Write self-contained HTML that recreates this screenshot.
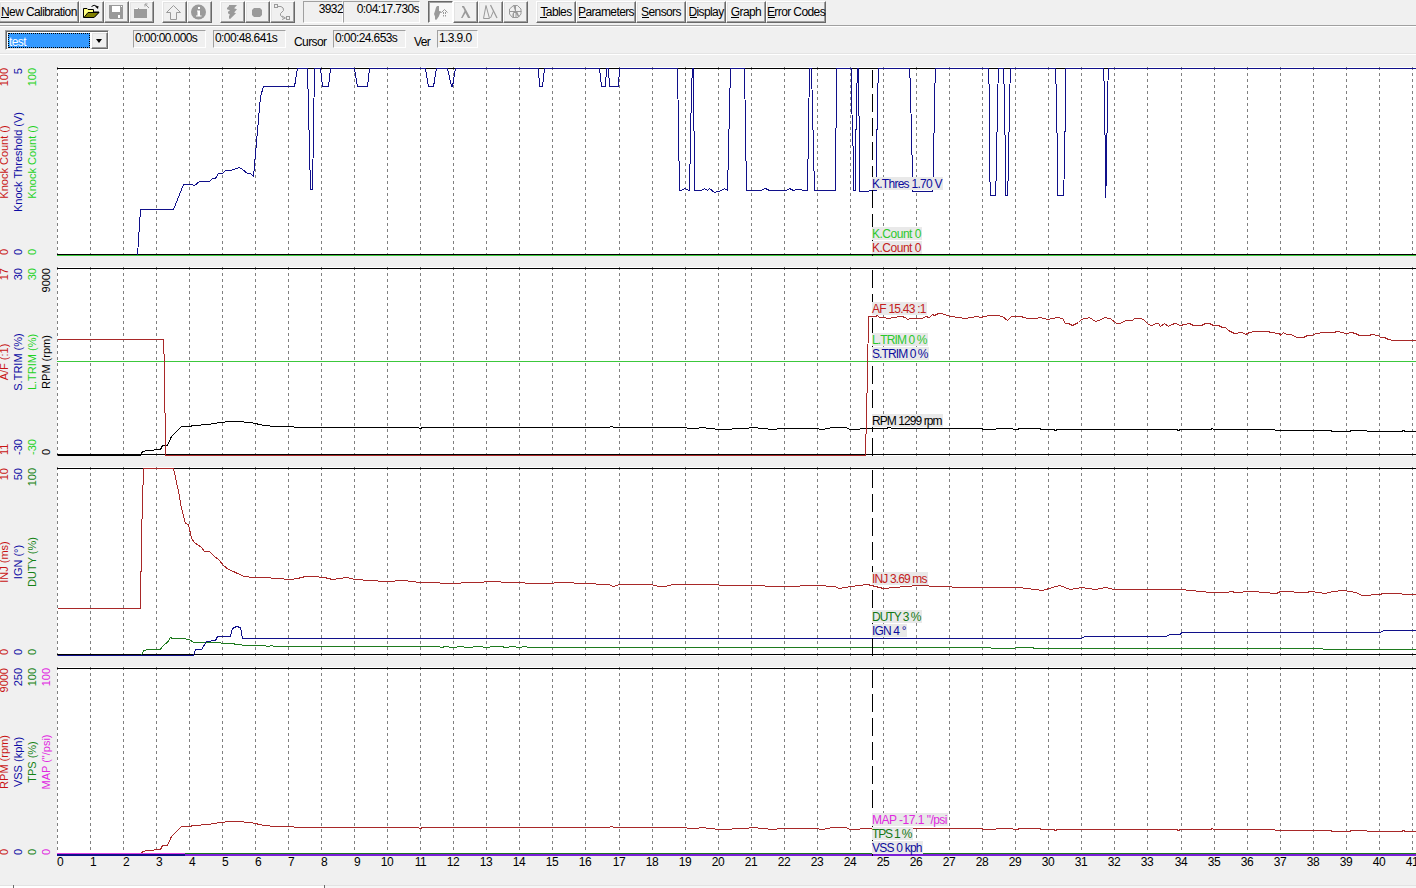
<!DOCTYPE html><html><head><meta charset="utf-8"><style>
*{margin:0;padding:0;box-sizing:border-box}
html,body{width:1416px;height:888px;overflow:hidden;background:#f0f0f0;font-family:"Liberation Sans",sans-serif;font-size:12px;color:#000;letter-spacing:-0.6px}
.a{position:absolute}
.btn{position:absolute;top:1px;height:22px;border-top:1px solid #fff;border-left:1px solid #fff;border-right:1px solid #696969;border-bottom:1px solid #696969;box-shadow:inset -1px -1px #a0a0a0,inset 1px 1px #e3e3e3;background:#f0f0f0;white-space:nowrap}
.btn svg{position:absolute;left:0;top:0}
.t{position:absolute;top:6px;white-space:nowrap;line-height:13px}
.u{position:absolute;height:1px;background:#000;top:17px}
.box{position:absolute;border-top:1px solid #a0a0a0;border-left:1px solid #a0a0a0;border-right:1px solid #fff;border-bottom:1px solid #fff;white-space:nowrap;line-height:13px}
</style></head><body>
<div class="btn" style="left:-1px;width:80px"></div><div class="t" style="left:1px">New Calibration</div><div class="u" style="left:1px;width:8px"></div>
<div class="btn" style="left:79px;width:25px"><svg style="left:-1px;top:-1px" width="24" height="21" viewBox="79 1 24 21"><path d="M83.5 17.5 V8.5 H87 L88 9.5 H93.5 V12 H99 L94 17.5 Z" fill="#ffff80" stroke="#000" stroke-width="1"/><path d="M84 17.5 L88 12.5 H99 L94 17.5 Z" fill="#808000" stroke="#000" stroke-width="1"/><path d="M91.5 6.5 Q94 4 97 6.5" fill="none" stroke="#000" stroke-width="1"/><path d="M95 6.5 L98.5 6 L98 9 Z" fill="#000"/></svg></div>
<div class="btn" style="left:104px;width:25px"><svg style="left:-1px;top:-1px" width="24" height="21" viewBox="104 1 24 21"><path d="M109 5 H123 V19 H110 L109 18 Z" fill="#9a9a9a"/><rect x="112" y="6" width="8" height="6" fill="#fff"/><rect x="118" y="15" width="2" height="3" fill="#fff"/><rect x="121" y="6" width="1" height="1" fill="#fff"/></svg></div>
<div class="btn" style="left:129px;width:25px"><svg style="left:-1px;top:-1px" width="24" height="21" viewBox="129 1 24 21"><path d="M134 18 V9 H135 V8 H139 V9 H147 V18 Z" fill="#9a9a9a"/><rect x="135" y="8" width="3" height="1" fill="#fff"/><path d="M145.5 4.5 L149 8" stroke="#9a9a9a" stroke-width="1"/><path d="M145 4 H147.5 M145 4 V6.5" stroke="#9a9a9a" stroke-width="1"/></svg></div>
<div class="btn" style="left:162px;width:25px"><svg style="left:-1px;top:-1px" width="24" height="21" viewBox="162 1 24 21"><path d="M173.5 5.5 L180.5 12.5 H176.5 V19.5 H170.5 V12.5 H166.5 Z" fill="none" stroke="#9a9a9a" stroke-width="1"/></svg></div>
<div class="btn" style="left:187px;width:25px"><svg style="left:-1px;top:-1px" width="24" height="21" viewBox="187 1 24 21"><circle cx="198.5" cy="12" r="7.5" fill="#9a9a9a"/><rect x="198" y="7" width="2" height="2" fill="#fff"/><path d="M197 10.5 H200 V15.5 H201.5 V16.5 H196 V15.5 H197.5 V11.5 H197 Z" fill="#fff"/></svg></div>
<div class="btn" style="left:220px;width:25px"><svg style="left:-1px;top:-1px" width="24" height="21" viewBox="220 1 24 21"><path d="M229 5 H237 L234.1 8.3 L237 9.3 L234.1 12.5 L236 13.3 L230.1 19 L229 18.5 V16 L230 14.8 L228 13.2 V11.8 L230 10.3 L227 9.3 V8 L229 6 Z" fill="#9a9a9a"/></svg></div>
<div class="btn" style="left:245px;width:25px"><svg style="left:-1px;top:-1px" width="24" height="21" viewBox="245 1 24 21"><path d="M254 8 H260 L262 10 V15 L260 17 H254 L252 15 V10 Z" fill="#9a9a9a"/></svg></div>
<div class="btn" style="left:270px;width:25px"><svg style="left:-1px;top:-1px" width="24" height="21" viewBox="270 1 24 21"><rect x="274.5" y="4.5" width="3" height="3" fill="none" stroke="#9a9a9a"/><path d="M277.5 6.5 H281 Q284 7.5 283.5 10.5 L280.5 13.5 V15.5 L283.5 18" fill="none" stroke="#9a9a9a"/><path d="M282 16 L285.5 18 L282 19.5" fill="none" stroke="#9a9a9a"/><rect x="286.5" y="16.5" width="3" height="3" fill="none" stroke="#9a9a9a"/></svg></div>
<div class="box" style="left:303px;top:1px;width:40px;height:22px"></div><div class="t" style="left:303px;width:40px;text-align:right;top:3px">3932</div>
<div class="box" style="left:343px;top:1px;width:77px;height:22px"></div><div class="t" style="left:343px;width:76px;text-align:right;top:3px">0:04:17.730s</div>
<div class="a" style="left:428px;top:1px;width:25px;height:22px;border-top:1px solid #696969;border-left:1px solid #696969;border-right:1px solid #fff;border-bottom:1px solid #fff;box-shadow:inset 1px 1px #a0a0a0;background:#f7f7f7"><svg style="position:absolute;left:-1px;top:-1px" width="25" height="21" viewBox="428 1 25 21"><path d="M437 6 H439 V11 L440.5 11.2 L442 12.6 L440 13 L439.8 14 L438.8 16.5 L436.5 19.8 L435 19.5 L435 16.5 L434 14 L434.5 12.5 L435 11 L436 7.5 Z" fill="#9a9a9a"/><path d="M441.5 12.5 L444.5 9.5 L447.5 12.5" fill="none" stroke="#9a9a9a" stroke-width="1"/><path d="M443.5 12 V16.5 M445.5 12 V16.5" fill="none" stroke="#9a9a9a" stroke-width="1" stroke-dasharray="2 1"/></svg></div>
<div class="btn" style="left:453px;width:25px"><svg style="left:-1px;top:-1px" width="25" height="21" viewBox="453 1 25 21"><path d="M462 6 H464 L470.5 18 H468 L465.5 13 L462.5 18 H461 L464.5 11 L463 7.5 H462 Z" fill="#9a9a9a"/></svg></div>
<div class="btn" style="left:478px;width:25px"><svg style="left:-1px;top:-1px" width="25" height="21" viewBox="478 1 25 21"><path d="M486 5.5 L483.5 18.5 H489.5 Z" fill="none" stroke="#9a9a9a"/><path d="M490.5 5 L497 18" stroke="#9a9a9a" stroke-width="1.2"/><path d="M493.5 11 L490.5 18" stroke="#9a9a9a" stroke-width="1"/></svg></div>
<div class="btn" style="left:503px;width:25px"><svg style="left:-1px;top:-1px" width="25" height="21" viewBox="503 1 25 21"><path d="M513.5 5.5 H517.5 L521 9 V14 L518 17.5 H512.5 L509.5 14 V9 Z" fill="none" stroke="#9a9a9a" stroke-width="1"/><path d="M509.5 11.5 H521.5" stroke="#9a9a9a" stroke-width="1"/><path d="M513 5 H516 V11 H515 Z" fill="#9a9a9a"/><path d="M514 11 H517 L519.5 17 H518 L516.5 14 V17.5 H515.5 V13 H514 V17.5 H512.5 V14 Z" fill="#9a9a9a"/></svg></div>
<div class="btn" style="left:536px;width:40px"></div><div class="t" style="left:536px;width:40px;text-align:center">Tables</div>
<div class="btn" style="left:576px;width:60px"></div><div class="t" style="left:576px;width:60px;text-align:center">Parameters</div>
<div class="btn" style="left:636px;width:50px"></div><div class="t" style="left:636px;width:50px;text-align:center">Sensors</div>
<div class="btn" style="left:686px;width:40px"></div><div class="t" style="left:686px;width:40px;text-align:center">Display</div>
<div class="btn" style="left:726px;width:40px"></div><div class="t" style="left:726px;width:40px;text-align:center">Graph</div>
<div class="btn" style="left:766px;width:60px"></div><div class="t" style="left:766px;width:60px;text-align:center">Error Codes</div>
<div class="u" style="left:540px;width:7px"></div>
<div class="u" style="left:579px;width:7px"></div>
<div class="u" style="left:642px;width:7px"></div>
<div class="u" style="left:690px;width:7px"></div>
<div class="u" style="left:731px;width:8px"></div>
<div class="u" style="left:768px;width:7px"></div>
<div class="a" style="left:0;top:25px;width:1416px;height:1px;background:#a0a0a0"></div>
<div class="a" style="left:0;top:26px;width:1416px;height:1px;background:#fff"></div>
<div class="a" style="left:5px;top:30px;width:104px;height:20px;border-top:1px solid #a0a0a0;border-left:1px solid #a0a0a0;border-right:1px solid #fff;border-bottom:1px solid #fff;box-shadow:inset 1px 1px #696969,inset -1px -1px #e3e3e3;background:#fff"></div>
<div class="a" style="left:8px;top:33px;width:82px;height:15px;background:#3399ff;border:1px dotted #000"></div>
<div class="t" style="left:9px;top:36px;color:#fff">test</div>
<div class="btn" style="left:91px;top:32px;width:17px;height:17px"></div>
<div class="a" style="left:96px;top:39px;width:0;height:0;border-left:3.5px solid transparent;border-right:3.5px solid transparent;border-top:4px solid #000"></div>
<div class="box" style="left:133px;top:30px;width:73px;height:18px"></div><div class="t" style="left:135px;top:32px">0:00:00.000s</div>
<div class="box" style="left:213px;top:30px;width:73px;height:18px"></div><div class="t" style="left:215px;top:32px">0:00:48.641s</div>
<div class="box" style="left:333px;top:30px;width:73px;height:18px"></div><div class="t" style="left:335px;top:32px">0:00:24.653s</div>
<div class="box" style="left:437px;top:30px;width:41px;height:18px"></div><div class="t" style="left:439px;top:32px">1.3.9.0</div>
<div class="a" style="left:0;top:53px;width:1416px;height:1px;background:#e4e4e4"></div>
<div class="a" style="left:0;top:54px;width:1416px;height:1px;background:#fff"></div>
<div class="t" style="left:294px;top:36px">Cursor</div>
<div class="t" style="left:414px;top:36px">Ver</div>
<svg width="1416" height="888" style="position:absolute;left:0;top:0" font-family='"Liberation Sans", sans-serif'><rect x="57" y="67" width="1359" height="189" fill="#fff"/><path d="M57.5 67 V256 M90.5 67 V256 M123.5 67 V256 M156.5 67 V256 M189.5 67 V256 M222.5 67 V256 M255.5 67 V256 M288.5 67 V256 M321.5 67 V256 M354.5 67 V256 M387.5 67 V256 M420.5 67 V256 M453.5 67 V256 M486.5 67 V256 M519.5 67 V256 M552.5 67 V256 M585.5 67 V256 M619.5 67 V256 M652.5 67 V256 M685.5 67 V256 M718.5 67 V256 M751.5 67 V256 M784.5 67 V256 M817.5 67 V256 M850.5 67 V256 M883.5 67 V256 M916.5 67 V256 M949.5 67 V256 M982.5 67 V256 M1015.5 67 V256 M1048.5 67 V256 M1081.5 67 V256 M1114.5 67 V256 M1147.5 67 V256 M1181.5 67 V256 M1214.5 67 V256 M1247.5 67 V256 M1280.5 67 V256 M1313.5 67 V256 M1346.5 67 V256 M1379.5 67 V256 M1412.5 67 V256" stroke="#808080" stroke-width="1" stroke-dasharray="3 3" fill="none" shape-rendering="crispEdges"/><path d="M57 68.5 H1416 M57 254.5 H1416" stroke="#000" stroke-width="1" shape-rendering="crispEdges"/><rect x="57" y="267" width="1359" height="189" fill="#fff"/><path d="M57.5 267 V456 M90.5 267 V456 M123.5 267 V456 M156.5 267 V456 M189.5 267 V456 M222.5 267 V456 M255.5 267 V456 M288.5 267 V456 M321.5 267 V456 M354.5 267 V456 M387.5 267 V456 M420.5 267 V456 M453.5 267 V456 M486.5 267 V456 M519.5 267 V456 M552.5 267 V456 M585.5 267 V456 M619.5 267 V456 M652.5 267 V456 M685.5 267 V456 M718.5 267 V456 M751.5 267 V456 M784.5 267 V456 M817.5 267 V456 M850.5 267 V456 M883.5 267 V456 M916.5 267 V456 M949.5 267 V456 M982.5 267 V456 M1015.5 267 V456 M1048.5 267 V456 M1081.5 267 V456 M1114.5 267 V456 M1147.5 267 V456 M1181.5 267 V456 M1214.5 267 V456 M1247.5 267 V456 M1280.5 267 V456 M1313.5 267 V456 M1346.5 267 V456 M1379.5 267 V456 M1412.5 267 V456" stroke="#808080" stroke-width="1" stroke-dasharray="3 3" fill="none" shape-rendering="crispEdges"/><path d="M57 268.5 H1416 M57 454.5 H1416" stroke="#000" stroke-width="1" shape-rendering="crispEdges"/><rect x="57" y="467" width="1359" height="189" fill="#fff"/><path d="M57.5 467 V656 M90.5 467 V656 M123.5 467 V656 M156.5 467 V656 M189.5 467 V656 M222.5 467 V656 M255.5 467 V656 M288.5 467 V656 M321.5 467 V656 M354.5 467 V656 M387.5 467 V656 M420.5 467 V656 M453.5 467 V656 M486.5 467 V656 M519.5 467 V656 M552.5 467 V656 M585.5 467 V656 M619.5 467 V656 M652.5 467 V656 M685.5 467 V656 M718.5 467 V656 M751.5 467 V656 M784.5 467 V656 M817.5 467 V656 M850.5 467 V656 M883.5 467 V656 M916.5 467 V656 M949.5 467 V656 M982.5 467 V656 M1015.5 467 V656 M1048.5 467 V656 M1081.5 467 V656 M1114.5 467 V656 M1147.5 467 V656 M1181.5 467 V656 M1214.5 467 V656 M1247.5 467 V656 M1280.5 467 V656 M1313.5 467 V656 M1346.5 467 V656 M1379.5 467 V656 M1412.5 467 V656" stroke="#808080" stroke-width="1" stroke-dasharray="3 3" fill="none" shape-rendering="crispEdges"/><path d="M57 468.5 H1416 M57 654.5 H1416" stroke="#000" stroke-width="1" shape-rendering="crispEdges"/><rect x="57" y="667" width="1359" height="189" fill="#fff"/><path d="M57.5 667 V856 M90.5 667 V856 M123.5 667 V856 M156.5 667 V856 M189.5 667 V856 M222.5 667 V856 M255.5 667 V856 M288.5 667 V856 M321.5 667 V856 M354.5 667 V856 M387.5 667 V856 M420.5 667 V856 M453.5 667 V856 M486.5 667 V856 M519.5 667 V856 M552.5 667 V856 M585.5 667 V856 M619.5 667 V856 M652.5 667 V856 M685.5 667 V856 M718.5 667 V856 M751.5 667 V856 M784.5 667 V856 M817.5 667 V856 M850.5 667 V856 M883.5 667 V856 M916.5 667 V856 M949.5 667 V856 M982.5 667 V856 M1015.5 667 V856 M1048.5 667 V856 M1081.5 667 V856 M1114.5 667 V856 M1147.5 667 V856 M1181.5 667 V856 M1214.5 667 V856 M1247.5 667 V856 M1280.5 667 V856 M1313.5 667 V856 M1346.5 667 V856 M1379.5 667 V856 M1412.5 667 V856" stroke="#808080" stroke-width="1" stroke-dasharray="3 3" fill="none" shape-rendering="crispEdges"/><path d="M57 668.5 H1416 M57 854.5 H1416" stroke="#000" stroke-width="1" shape-rendering="crispEdges"/><polyline points="57.5,255.5 137.5,255.5 140.5,209.5 173.5,209.5 183.5,184.5 191.5,184.5 194.5,185.5 199.5,181.5 209.5,181.5 212.5,178.5 215.5,178.5 218.5,173.5 222.5,173.5 225.5,170.5 230.5,170.5 239.5,167.5 242.5,169.5 247.5,173.5 250.5,173.5 253.5,176.5 260.5,96.5 263.5,86.5 294.5,86.5 297.5,68.5 307.5,68.5 310.5,189.5 312.5,189.5 314.5,68.5 320.5,68.5 322.5,86.5 328.5,86.5 330.5,68.5 354.5,68.5 357.5,86.5 367.5,86.5 369.5,68.5 425.5,68.5 428.5,86.5 433.5,86.5 436.5,68.5 447.5,68.5 451.5,86.5 452.5,86.5 455.5,68.5 538.5,68.5 539.5,86.5 542.5,86.5 544.5,68.5 599.5,68.5 601.5,86.5 605.5,86.5 606.5,68.5 608.5,68.5 609.5,86.5 618.5,86.5 619.5,68.5 677.5,68.5 679.5,190.5 681.5,190.5 684.5,188.5 689.5,190.5 691.5,88.5 692.5,68.5 693.5,68.5 694.5,190.5 701.5,190.5 704.5,188.5 707.5,190.5 709.5,188.5 714.5,192.5 721.5,190.5 724.5,188.5 727.5,190.5 730.5,68.5 744.5,68.5 746.5,190.5 760.5,190.5 765.5,188.5 769.5,190.5 786.5,190.5 789.5,188.5 793.5,190.5 796.5,189.5 807.5,190.5 809.5,68.5 811.5,68.5 814.5,190.5 835.5,190.5 836.5,68.5 851.5,68.5 851.5,98.5 853.5,161.5 853.5,190.5 855.5,190.5 855.5,161.5 856.5,98.5 857.5,68.5 858.5,68.5 859.5,161.5 859.5,191.5 867.5,191.5 870.5,190.5 876.5,190.5 876.5,161.5 877.5,98.5 878.5,68.5 909.5,68.5 910.5,87.5 911.5,138.5 912.5,170.5 912.5,191.5 932.5,191.5 933.5,170.5 934.5,98.5 935.5,68.5 988.5,68.5 989.5,99.5 989.5,167.5 990.5,195.5 995.5,195.5 996.5,167.5 997.5,99.5 998.5,68.5 1003.5,68.5 1004.5,99.5 1005.5,167.5 1005.5,195.5 1007.5,195.5 1008.5,167.5 1009.5,99.5 1010.5,68.5 1055.5,68.5 1056.5,99.5 1057.5,164.5 1057.5,195.5 1063.5,195.5 1064.5,164.5 1065.5,99.5 1065.5,68.5 1103.5,68.5 1104.5,93.5 1105.5,174.5 1105.5,197.5 1106.5,174.5 1107.5,93.5 1108.5,68.5 1416.5,68.5" fill="none" stroke="#10108a" stroke-width="1" stroke-linejoin="miter" shape-rendering="crispEdges"/><path d="M57 255.5 H1416" stroke="#3cc83c" stroke-width="1" shape-rendering="crispEdges"/><path d="M57 361.5 H1416" stroke="#3cc83c" stroke-width="1" shape-rendering="crispEdges"/><polyline points="57.5,455.5 140.5,455.5 142.5,451.5 147.5,450.5 160.5,449.5 162.5,445.5 167.5,445.5 171.5,436.5 181.5,426.5 188.5,426.5 194.5,425.5 208.5,424.5 219.5,422.5 230.5,421.5 237.5,421.5 250.5,422.5 264.5,425.5 274.5,426.5 292.5,426.5 295.5,427.5 417.5,427.5 420.5,428.5 422.5,427.5 608.5,427.5 611.5,426.5 614.5,427.5 677.5,427.5 695.5,428.5 702.5,427.5 709.5,428.5 719.5,429.5 745.5,428.5 752.5,427.5 762.5,428.5 772.5,429.5 782.5,428.5 815.5,428.5 822.5,429.5 832.5,427.5 845.5,427.5 850.5,429.5 870.5,428.5 885.5,428.5 889.5,427.5 892.5,428.5 980.5,428.5 984.5,429.5 1008.5,428.5 1016.5,429.5 1020.5,428.5 1038.5,428.5 1042.5,429.5 1053.5,429.5 1055.5,430.5 1057.5,429.5 1176.5,429.5 1178.5,430.5 1180.5,429.5 1210.5,429.5 1212.5,428.5 1213.5,429.5 1274.5,429.5 1275.5,430.5 1330.5,430.5 1332.5,431.5 1349.5,431.5 1351.5,430.5 1366.5,430.5 1367.5,431.5 1401.5,431.5 1403.5,430.5 1405.5,431.5 1416.5,431.5" fill="none" stroke="#000" stroke-width="1" stroke-linejoin="miter" shape-rendering="crispEdges"/><polyline points="57.5,339.5 163.5,339.5 164.5,367.5 165.5,455.5 865.5,455.5 867.5,373.5 868.5,316.5 875.5,316.5 877.5,315.5 879.5,317.5 882.5,317.5 888.5,318.5 893.5,317.5 901.5,316.5 905.5,317.5 907.5,319.5 910.5,318.5 916.5,318.5 922.5,318.5 925.5,316.5 929.5,317.5 932.5,314.5 934.5,315.5 938.5,313.5 941.5,313.5 944.5,314.5 947.5,315.5 950.5,316.5 958.5,317.5 965.5,318.5 971.5,317.5 977.5,316.5 980.5,317.5 984.5,316.5 990.5,315.5 997.5,315.5 1002.5,316.5 1007.5,320.5 1011.5,316.5 1015.5,316.5 1021.5,316.5 1023.5,317.5 1028.5,318.5 1035.5,318.5 1040.5,317.5 1047.5,319.5 1052.5,318.5 1057.5,317.5 1062.5,318.5 1065.5,323.5 1068.5,323.5 1072.5,325.5 1078.5,322.5 1081.5,319.5 1084.5,318.5 1086.5,318.5 1089.5,317.5 1095.5,321.5 1098.5,320.5 1105.5,317.5 1108.5,318.5 1110.5,318.5 1116.5,323.5 1120.5,323.5 1125.5,320.5 1132.5,320.5 1134.5,318.5 1141.5,318.5 1144.5,320.5 1148.5,324.5 1151.5,325.5 1156.5,323.5 1158.5,323.5 1160.5,326.5 1164.5,323.5 1168.5,326.5 1171.5,324.5 1175.5,323.5 1180.5,325.5 1184.5,324.5 1189.5,323.5 1193.5,325.5 1201.5,325.5 1205.5,323.5 1209.5,323.5 1213.5,325.5 1218.5,325.5 1222.5,327.5 1225.5,327.5 1228.5,330.5 1234.5,333.5 1242.5,332.5 1245.5,334.5 1249.5,332.5 1254.5,331.5 1263.5,331.5 1268.5,331.5 1270.5,332.5 1279.5,333.5 1280.5,335.5 1283.5,332.5 1286.5,334.5 1290.5,334.5 1297.5,337.5 1303.5,337.5 1307.5,335.5 1312.5,335.5 1315.5,333.5 1324.5,332.5 1333.5,332.5 1337.5,331.5 1346.5,333.5 1351.5,332.5 1355.5,333.5 1359.5,335.5 1369.5,335.5 1371.5,334.5 1378.5,335.5 1380.5,337.5 1384.5,337.5 1388.5,339.5 1393.5,340.5 1416.5,340.5" fill="none" stroke="#a82828" stroke-width="1" stroke-linejoin="miter" shape-rendering="crispEdges"/><polyline points="57.5,655.5 141.5,655.5 143.5,650.5 148.5,649.5 160.5,649.5 161.5,647.5 165.5,643.5 167.5,642.5 170.5,637.5 172.5,638.5 182.5,638.5 189.5,639.5 193.5,642.5 220.5,642.5 221.5,643.5 232.5,643.5 236.5,644.5 246.5,645.5 264.5,645.5 267.5,646.5 272.5,645.5 273.5,646.5 418.5,646.5 420.5,646.5 438.5,646.5 441.5,647.5 445.5,646.5 452.5,647.5 461.5,646.5 466.5,647.5 479.5,646.5 486.5,647.5 493.5,646.5 502.5,646.5 504.5,647.5 513.5,646.5 518.5,647.5 525.5,646.5 528.5,647.5 963.5,647.5 968.5,647.5 980.5,647.5 1000.5,648.5 1030.5,647.5 1036.5,648.5 1312.5,648.5 1333.5,649.5 1416.5,649.5" fill="none" stroke="#1e7a1e" stroke-width="1" stroke-linejoin="miter" shape-rendering="crispEdges"/><polyline points="57.5,655.5 193.5,655.5 195.5,649.5 201.5,649.5 206.5,641.5 215.5,640.5 217.5,636.5 230.5,636.5 232.5,628.5 236.5,626.5 240.5,627.5 242.5,638.5 1081.5,638.5 1084.5,636.5 1166.5,636.5 1169.5,634.5 1180.5,634.5 1181.5,632.5 1380.5,632.5 1383.5,630.5 1416.5,630.5" fill="none" stroke="#10108a" stroke-width="1" stroke-linejoin="miter" shape-rendering="crispEdges"/><polyline points="57.5,608.5 140.5,608.5 141.5,536.5 143.5,468.5 173.5,468.5 175.5,477.5 178.5,491.5 181.5,508.5 185.5,523.5 188.5,524.5 191.5,538.5 194.5,542.5 201.5,547.5 204.5,551.5 209.5,551.5 213.5,555.5 219.5,560.5 223.5,565.5 228.5,569.5 233.5,571.5 237.5,573.5 244.5,576.5 253.5,577.5 264.5,577.5 290.5,579.5 297.5,578.5 305.5,576.5 312.5,576.5 324.5,577.5 332.5,579.5 346.5,577.5 355.5,579.5 369.5,580.5 386.5,581.5 403.5,580.5 420.5,582.5 428.5,582.5 450.5,583.5 472.5,582.5 495.5,581.5 506.5,582.5 543.5,583.5 565.5,582.5 582.5,583.5 608.5,584.5 613.5,586.5 619.5,584.5 650.5,584.5 659.5,586.5 664.5,586.5 673.5,584.5 704.5,584.5 732.5,585.5 746.5,585.5 783.5,586.5 817.5,585.5 834.5,586.5 839.5,588.5 850.5,586.5 867.5,584.5 883.5,588.5 917.5,585.5 963.5,587.5 1019.5,587.5 1042.5,590.5 1059.5,585.5 1070.5,589.5 1081.5,587.5 1095.5,589.5 1105.5,587.5 1114.5,589.5 1160.5,589.5 1180.5,589.5 1211.5,592.5 1216.5,592.5 1227.5,592.5 1230.5,591.5 1236.5,592.5 1249.5,591.5 1254.5,591.5 1263.5,592.5 1276.5,593.5 1280.5,591.5 1306.5,592.5 1310.5,591.5 1319.5,592.5 1324.5,593.5 1333.5,591.5 1343.5,590.5 1355.5,592.5 1362.5,595.5 1380.5,594.5 1382.5,593.5 1400.5,593.5 1403.5,594.5 1416.5,594.5" fill="none" stroke="#a82828" stroke-width="1" stroke-linejoin="miter" shape-rendering="crispEdges"/><polyline points="57.5,855.5 140.5,855.5 142.5,851.5 147.5,850.5 160.5,849.5 162.5,845.5 167.5,845.5 171.5,836.5 181.5,826.5 188.5,826.5 194.5,825.5 208.5,824.5 219.5,822.5 230.5,821.5 237.5,821.5 250.5,822.5 264.5,825.5 274.5,826.5 292.5,826.5 295.5,827.5 417.5,827.5 420.5,828.5 422.5,827.5 608.5,827.5 611.5,826.5 614.5,827.5 677.5,827.5 695.5,828.5 702.5,827.5 709.5,828.5 719.5,829.5 745.5,828.5 752.5,827.5 762.5,828.5 772.5,829.5 782.5,828.5 815.5,828.5 822.5,829.5 832.5,827.5 845.5,827.5 850.5,829.5 870.5,828.5 885.5,828.5 889.5,827.5 892.5,828.5 980.5,828.5 984.5,829.5 1008.5,828.5 1016.5,829.5 1020.5,828.5 1038.5,828.5 1042.5,829.5 1053.5,829.5 1055.5,830.5 1057.5,829.5 1176.5,829.5 1178.5,830.5 1180.5,829.5 1210.5,829.5 1212.5,828.5 1213.5,829.5 1274.5,829.5 1275.5,830.5 1330.5,830.5 1332.5,831.5 1349.5,831.5 1351.5,830.5 1366.5,830.5 1367.5,831.5 1401.5,831.5 1403.5,830.5 1405.5,831.5 1416.5,831.5" fill="none" stroke="#a82828" stroke-width="1" stroke-linejoin="miter" shape-rendering="crispEdges"/><path d="M57 853.5 H185" stroke="#e040e0" stroke-width="1" shape-rendering="crispEdges"/><path d="M185 853.5 H1416" stroke="#1e7a1e" stroke-width="1" shape-rendering="crispEdges"/><path d="M57 855 H185" stroke="#10108a" stroke-width="2" shape-rendering="crispEdges"/><path d="M185 855 H1416" stroke="#7a20d8" stroke-width="2" shape-rendering="crispEdges"/><path d="M872.5 70 V256" stroke="#000" stroke-width="1" stroke-dasharray="18 6" shape-rendering="crispEdges"/><path d="M872.5 270 V456" stroke="#000" stroke-width="1" stroke-dasharray="18 6" shape-rendering="crispEdges"/><path d="M872.5 470 V656" stroke="#000" stroke-width="1" stroke-dasharray="18 6" shape-rendering="crispEdges"/><path d="M872.5 670 V856" stroke="#000" stroke-width="1" stroke-dasharray="18 6" shape-rendering="crispEdges"/><rect x="872" y="177" width="71" height="13" fill="#e9e9e9"/><text x="872" y="188" fill="#0c0c9c" font-size="12" letter-spacing="0" textLength="70.5" lengthAdjust="spacing">K.Thres 1.70 V</text><rect x="872" y="227" width="50" height="13" fill="#e9e9e9"/><text x="872" y="238" fill="#2cc82c" font-size="12" letter-spacing="0" textLength="49.5" lengthAdjust="spacing">K.Count 0</text><rect x="872" y="241" width="50" height="13" fill="#e9e9e9"/><text x="872" y="252" fill="#c42020" font-size="12" letter-spacing="0" textLength="49.5" lengthAdjust="spacing">K.Count 0</text><rect x="872" y="302" width="55" height="13" fill="#e9e9e9"/><text x="872" y="313" fill="#c42020" font-size="12" letter-spacing="0" textLength="54.5" lengthAdjust="spacing">AF 15.43 :1</text><rect x="872" y="333" width="56" height="13" fill="#e9e9e9"/><text x="872" y="344" fill="#2cc82c" font-size="12" letter-spacing="0" textLength="55.5" lengthAdjust="spacing">L.TRIM 0 %</text><rect x="872" y="347" width="57" height="13" fill="#e9e9e9"/><text x="872" y="358" fill="#0c0c9c" font-size="12" letter-spacing="0" textLength="56.5" lengthAdjust="spacing">S.TRIM 0 %</text><rect x="872" y="414" width="71" height="13" fill="#e9e9e9"/><text x="872" y="425" fill="#000" font-size="12" letter-spacing="0" textLength="70.5" lengthAdjust="spacing">RPM 1299 rpm</text><rect x="872" y="572" width="56" height="13" fill="#e9e9e9"/><text x="872" y="583" fill="#c42020" font-size="12" letter-spacing="0" textLength="55.5" lengthAdjust="spacing">INJ 3.69 ms</text><rect x="872" y="610" width="50" height="13" fill="#e9e9e9"/><text x="872" y="621" fill="#147814" font-size="12" letter-spacing="0" textLength="49.5" lengthAdjust="spacing">DUTY 3 %</text><rect x="872" y="624" width="35" height="13" fill="#e9e9e9"/><text x="872" y="635" fill="#0c0c9c" font-size="12" letter-spacing="0" textLength="34.5" lengthAdjust="spacing">IGN 4 °</text><rect x="872" y="813" width="76" height="13" fill="#e9e9e9"/><text x="872" y="824" fill="#e028e0" font-size="12" letter-spacing="0" textLength="75.5" lengthAdjust="spacing">MAP -17.1 "/psi</text><rect x="872" y="827" width="41" height="13" fill="#e9e9e9"/><text x="872" y="838" fill="#147814" font-size="12" letter-spacing="0" textLength="40.5" lengthAdjust="spacing">TPS 1 %</text><rect x="872" y="841" width="51" height="13" fill="#e9e9e9"/><text x="872" y="852" fill="#0c0c9c" font-size="12" letter-spacing="0" textLength="50.5" lengthAdjust="spacing">VSS 0 kph</text><text x="63" y="866" font-size="12" text-anchor="end" fill="#000">0</text><text x="96" y="866" font-size="12" text-anchor="end" fill="#000">1</text><text x="129" y="866" font-size="12" text-anchor="end" fill="#000">2</text><text x="162" y="866" font-size="12" text-anchor="end" fill="#000">3</text><text x="195" y="866" font-size="12" text-anchor="end" fill="#000">4</text><text x="228" y="866" font-size="12" text-anchor="end" fill="#000">5</text><text x="261" y="866" font-size="12" text-anchor="end" fill="#000">6</text><text x="294" y="866" font-size="12" text-anchor="end" fill="#000">7</text><text x="327" y="866" font-size="12" text-anchor="end" fill="#000">8</text><text x="360" y="866" font-size="12" text-anchor="end" fill="#000">9</text><text x="393" y="866" font-size="12" text-anchor="end" fill="#000">10</text><text x="426" y="866" font-size="12" text-anchor="end" fill="#000">11</text><text x="459" y="866" font-size="12" text-anchor="end" fill="#000">12</text><text x="492" y="866" font-size="12" text-anchor="end" fill="#000">13</text><text x="525" y="866" font-size="12" text-anchor="end" fill="#000">14</text><text x="558" y="866" font-size="12" text-anchor="end" fill="#000">15</text><text x="591" y="866" font-size="12" text-anchor="end" fill="#000">16</text><text x="625" y="866" font-size="12" text-anchor="end" fill="#000">17</text><text x="658" y="866" font-size="12" text-anchor="end" fill="#000">18</text><text x="691" y="866" font-size="12" text-anchor="end" fill="#000">19</text><text x="724" y="866" font-size="12" text-anchor="end" fill="#000">20</text><text x="757" y="866" font-size="12" text-anchor="end" fill="#000">21</text><text x="790" y="866" font-size="12" text-anchor="end" fill="#000">22</text><text x="823" y="866" font-size="12" text-anchor="end" fill="#000">23</text><text x="856" y="866" font-size="12" text-anchor="end" fill="#000">24</text><text x="889" y="866" font-size="12" text-anchor="end" fill="#000">25</text><text x="922" y="866" font-size="12" text-anchor="end" fill="#000">26</text><text x="955" y="866" font-size="12" text-anchor="end" fill="#000">27</text><text x="988" y="866" font-size="12" text-anchor="end" fill="#000">28</text><text x="1021" y="866" font-size="12" text-anchor="end" fill="#000">29</text><text x="1054" y="866" font-size="12" text-anchor="end" fill="#000">30</text><text x="1087" y="866" font-size="12" text-anchor="end" fill="#000">31</text><text x="1120" y="866" font-size="12" text-anchor="end" fill="#000">32</text><text x="1153" y="866" font-size="12" text-anchor="end" fill="#000">33</text><text x="1187" y="866" font-size="12" text-anchor="end" fill="#000">34</text><text x="1220" y="866" font-size="12" text-anchor="end" fill="#000">35</text><text x="1253" y="866" font-size="12" text-anchor="end" fill="#000">36</text><text x="1286" y="866" font-size="12" text-anchor="end" fill="#000">37</text><text x="1319" y="866" font-size="12" text-anchor="end" fill="#000">38</text><text x="1352" y="866" font-size="12" text-anchor="end" fill="#000">39</text><text x="1385" y="866" font-size="12" text-anchor="end" fill="#000">40</text><text x="1418" y="866" font-size="12" text-anchor="end" fill="#000">41</text><text transform="translate(8,68) rotate(-90)" text-anchor="end" fill="#c81414" font-size="11" letter-spacing="0">100</text><text transform="translate(8,162.0) rotate(-90)" text-anchor="middle" fill="#c81414" font-size="11" letter-spacing="0">Knock Count ()</text><text transform="translate(8,255) rotate(-90)" text-anchor="start" fill="#c81414" font-size="11" letter-spacing="0">0</text><text transform="translate(22,68) rotate(-90)" text-anchor="end" fill="#0c0ca4" font-size="11" letter-spacing="0">5</text><text transform="translate(22,162.0) rotate(-90)" text-anchor="middle" fill="#0c0ca4" font-size="11" letter-spacing="0">Knock Threshold (V)</text><text transform="translate(22,255) rotate(-90)" text-anchor="start" fill="#0c0ca4" font-size="11" letter-spacing="0">0</text><text transform="translate(36,68) rotate(-90)" text-anchor="end" fill="#1ed21e" font-size="11" letter-spacing="0">100</text><text transform="translate(36,162.0) rotate(-90)" text-anchor="middle" fill="#1ed21e" font-size="11" letter-spacing="0">Knock Count ()</text><text transform="translate(36,255) rotate(-90)" text-anchor="start" fill="#1ed21e" font-size="11" letter-spacing="0">0</text><text transform="translate(8,268) rotate(-90)" text-anchor="end" fill="#c81414" font-size="11" letter-spacing="0">17</text><text transform="translate(8,362.0) rotate(-90)" text-anchor="middle" fill="#c81414" font-size="11" letter-spacing="0">A/F (:1)</text><text transform="translate(8,455) rotate(-90)" text-anchor="start" fill="#c81414" font-size="11" letter-spacing="0">11</text><text transform="translate(22,268) rotate(-90)" text-anchor="end" fill="#0c0ca4" font-size="11" letter-spacing="0">30</text><text transform="translate(22,362.0) rotate(-90)" text-anchor="middle" fill="#0c0ca4" font-size="11" letter-spacing="0">S.TRIM (%)</text><text transform="translate(22,455) rotate(-90)" text-anchor="start" fill="#0c0ca4" font-size="11" letter-spacing="0">-30</text><text transform="translate(36,268) rotate(-90)" text-anchor="end" fill="#1ed21e" font-size="11" letter-spacing="0">30</text><text transform="translate(36,362.0) rotate(-90)" text-anchor="middle" fill="#1ed21e" font-size="11" letter-spacing="0">L.TRIM (%)</text><text transform="translate(36,455) rotate(-90)" text-anchor="start" fill="#1ed21e" font-size="11" letter-spacing="0">-30</text><text transform="translate(50,268) rotate(-90)" text-anchor="end" fill="#000" font-size="11" letter-spacing="0">9000</text><text transform="translate(50,362.0) rotate(-90)" text-anchor="middle" fill="#000" font-size="11" letter-spacing="0">RPM (rpm)</text><text transform="translate(50,455) rotate(-90)" text-anchor="start" fill="#000" font-size="11" letter-spacing="0">0</text><text transform="translate(8,468) rotate(-90)" text-anchor="end" fill="#c81414" font-size="11" letter-spacing="0">10</text><text transform="translate(8,562.0) rotate(-90)" text-anchor="middle" fill="#c81414" font-size="11" letter-spacing="0">INJ (ms)</text><text transform="translate(8,655) rotate(-90)" text-anchor="start" fill="#c81414" font-size="11" letter-spacing="0">0</text><text transform="translate(22,468) rotate(-90)" text-anchor="end" fill="#0c0ca4" font-size="11" letter-spacing="0">50</text><text transform="translate(22,562.0) rotate(-90)" text-anchor="middle" fill="#0c0ca4" font-size="11" letter-spacing="0">IGN (°)</text><text transform="translate(22,655) rotate(-90)" text-anchor="start" fill="#0c0ca4" font-size="11" letter-spacing="0">0</text><text transform="translate(36,468) rotate(-90)" text-anchor="end" fill="#148214" font-size="11" letter-spacing="0">100</text><text transform="translate(36,562.0) rotate(-90)" text-anchor="middle" fill="#148214" font-size="11" letter-spacing="0">DUTY (%)</text><text transform="translate(36,655) rotate(-90)" text-anchor="start" fill="#148214" font-size="11" letter-spacing="0">0</text><text transform="translate(8,668) rotate(-90)" text-anchor="end" fill="#c81414" font-size="11" letter-spacing="0">9000</text><text transform="translate(8,762.0) rotate(-90)" text-anchor="middle" fill="#c81414" font-size="11" letter-spacing="0">RPM (rpm)</text><text transform="translate(8,855) rotate(-90)" text-anchor="start" fill="#c81414" font-size="11" letter-spacing="0">0</text><text transform="translate(22,668) rotate(-90)" text-anchor="end" fill="#0c0ca4" font-size="11" letter-spacing="0">250</text><text transform="translate(22,762.0) rotate(-90)" text-anchor="middle" fill="#0c0ca4" font-size="11" letter-spacing="0">VSS (kph)</text><text transform="translate(22,855) rotate(-90)" text-anchor="start" fill="#0c0ca4" font-size="11" letter-spacing="0">0</text><text transform="translate(36,668) rotate(-90)" text-anchor="end" fill="#148214" font-size="11" letter-spacing="0">100</text><text transform="translate(36,762.0) rotate(-90)" text-anchor="middle" fill="#148214" font-size="11" letter-spacing="0">TPS (%)</text><text transform="translate(36,855) rotate(-90)" text-anchor="start" fill="#148214" font-size="11" letter-spacing="0">0</text><text transform="translate(50,668) rotate(-90)" text-anchor="end" fill="#e028e0" font-size="11" letter-spacing="0">100</text><text transform="translate(50,762.0) rotate(-90)" text-anchor="middle" fill="#e028e0" font-size="11" letter-spacing="0">MAP ("/psi)</text><text transform="translate(50,855) rotate(-90)" text-anchor="start" fill="#e028e0" font-size="11" letter-spacing="0">0</text></svg>
<div class="a" style="left:0;top:885px;width:1416px;height:1px;background:#e3e3e3"></div>
<div class="a" style="left:0;top:886px;width:325px;height:2px;background:#fff"></div>
<div class="a" style="left:325px;top:886px;width:1091px;height:2px;background:#f6f6f6"></div>
<div class="a" style="left:13px;top:885px;width:1px;height:3px;background:#696969"></div>
<div class="a" style="left:324px;top:885px;width:1px;height:3px;background:#696969"></div>
</body></html>
